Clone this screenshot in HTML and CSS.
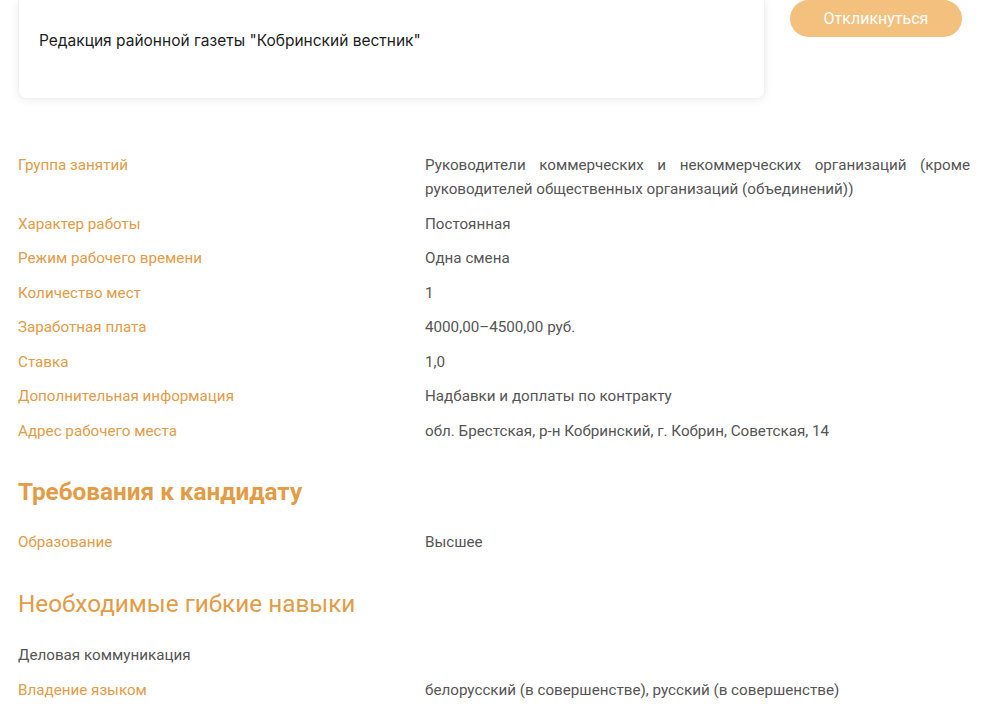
FILE: index.html
```html
<!DOCTYPE html>
<html lang="ru">
<head>
<meta charset="utf-8">
<link rel="stylesheet" href="styles.css">
</head>
<body>
<div class="page">
  <div class="top">
    <div class="card">Редакция районной газеты "Кобринский вестник"</div>
    <button class="btn">Откликнуться</button>
  </div>

  <dl class="props first">
    <div class="row"><dt>Группа занятий</dt><dd class="justify">Руководители коммерческих и некоммерческих организаций (кроме руководителей общественных организаций (объединений))</dd></div>
    <div class="row"><dt>Характер работы</dt><dd>Постоянная</dd></div>
    <div class="row"><dt>Режим рабочего времени</dt><dd>Одна смена</dd></div>
    <div class="row"><dt>Количество мест</dt><dd>1</dd></div>
    <div class="row"><dt>Заработная плата</dt><dd>4000,00–4500,00 руб.</dd></div>
    <div class="row"><dt>Ставка</dt><dd>1,0</dd></div>
    <div class="row"><dt>Дополнительная информация</dt><dd>Надбавки и доплаты по контракту</dd></div>
    <div class="row"><dt>Адрес рабочего места</dt><dd>обл. Брестская, р-н Кобринский, г. Кобрин, Советская, 14</dd></div>
  </dl>

  <h2 class="h-bold">Требования к кандидату</h2>
  <dl class="props">
    <div class="row"><dt>Образование</dt><dd>Высшее</dd></div>
  </dl>

  <h2 class="h-light">Необходимые гибкие навыки</h2>
  <p class="skill">Деловая коммуникация</p>
  <dl class="props">
    <div class="row"><dt>Владение языком</dt><dd>белорусский (в совершенстве), русский (в совершенстве)</dd></div>
  </dl>
</div>
</body>
</html>
```

FILE: styles.css
```css
* { box-sizing: border-box; }
html, body { margin: 0; padding: 0; background: #fff; }
body {
  font-family: Roboto, "Liberation Sans", Arial, sans-serif;
  font-size: 15.2px;
  color: #555;
}
.page {
  padding: 0 30px 0 18px;
}
.top {
  display: flex;
  align-items: flex-start;
  gap: 25px;
}
.card {
  flex: 0 0 747px;
  height: 99px;
  border-radius: 0 0 8px 8px;
  background: #fff;
  box-shadow: 0 1px 8px rgba(0,0,0,0.08);
  border: 1px solid #f1f1f1;
  border-top: none;
  padding: 31px 20px 0 20px;
  font-family: Inter, Roboto, sans-serif;
  font-size: 15.5px;
  color: #1d1d1d;
}
.btn {
  width: 172px;
  height: 37px;
  border: none;
  border-radius: 19px;
  background: #f4c07e;
  color: #fff;
  font-family: Roboto, sans-serif;
  font-size: 16px;
  padding: 0;
}
.props {
  margin: 0;
}
.props.first {
  margin-top: 49px;
}
.row {
  display: grid;
  grid-template-columns: 407px 1fr;
  padding: 5.25px 0;
  line-height: 24px;
}
dt {
  color: #e39b46;
}
dd {
  margin: 0;
}
.justify {
  text-align: justify;
}
h2 {
  margin: 0;
  color: #e39b46;
  font-size: 24.3px;
  line-height: 30px;
}
.h-bold {
  font-weight: 700;
  margin-top: 28.5px;
  margin-bottom: 18px;
}
.h-light {
  font-weight: 400;
  margin-top: 30px;
  margin-bottom: 19px;
}
.skill {
  margin: 0;
  padding: 5.25px 0;
  line-height: 24px;
}
```
